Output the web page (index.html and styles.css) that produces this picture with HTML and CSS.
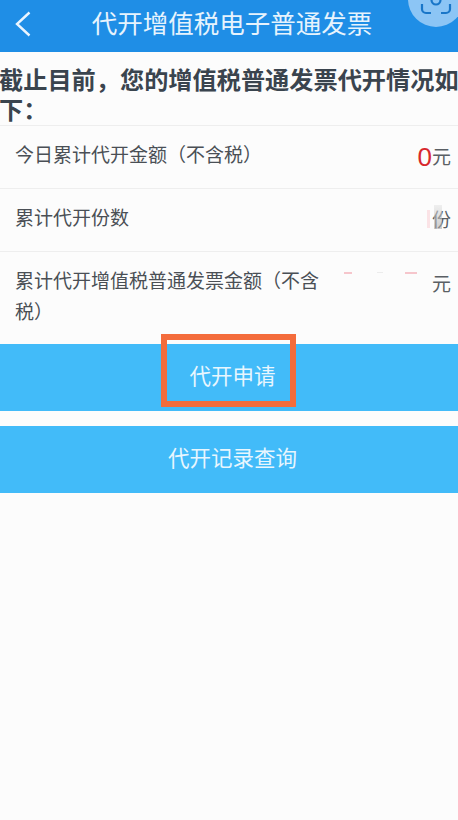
FILE: index.html
```html
<!DOCTYPE html>
<html lang="zh">
<head>
<meta charset="utf-8">
<title>代开增值税电子普通发票</title>
<link rel="stylesheet" href="styles.css">
</head>
<body>
<header class="bar">
  <svg class="back" viewBox="0 0 16 26" width="16" height="26"><path d="M14.5 1.5 2 13l12.5 11.5" fill="none" stroke="#eaf5ff" stroke-width="2.4"/></svg>
  <h1 class="title">代开增值税电子普通发票</h1>
  <div class="scan">
    <svg viewBox="0 0 32 32" width="32" height="32" class="scan-icon"><path d="M2 18v5a4 4 0 0 0 4 4h5M21 27h5a4 4 0 0 0 4-4v-5" fill="none" stroke="#1976c8" stroke-width="2.2"/><circle cx="16" cy="14" r="4.5" fill="none" stroke="#1976c8" stroke-width="2.2"/></svg>
  </div>
</header>
<main>
  <p class="intro">截止目前，您的增值税普通发票代开情况如下：</p>
  <div class="row">
    <span class="label">今日累计代开金额（不含税）</span>
    <span class="value"><b class="num">0</b>元</span>
  </div>
  <div class="row">
    <span class="label">累计代开份数</span>
    <span class="value">份<i class="smudge smudge-a"></i><i class="smudge smudge-b"></i></span>
  </div>
  <div class="row row-tall">
    <span class="label">累计代开增值税普通发票金额（不含税）</span>
    <span class="value"><i class="smudge smudge-c"></i><i class="smudge smudge-d"></i><i class="smudge smudge-e"></i>元</span>
  </div>
  <div class="actions">
    <button class="btn">代开申请</button>
    <button class="btn">代开记录查询</button>
    <div class="mark"></div>
  </div>
</main>
</body>
</html>
```
FILE: styles.css
```css
* { box-sizing: border-box; }
html, body { margin: 0; height: 100%; }
body {
  width: 458px;
  height: 820px;
  overflow: hidden;
  background: #fcfcfc;
  font-family: "Liberation Sans", "Noto Sans CJK SC", sans-serif;
  color: #444a50;
}
.bar {
  position: relative;
  height: 52px;
  background: #1f8ee6;
  display: flex;
  align-items: center;
  justify-content: center;
}
.back { position: absolute; left: 15px; top: 11px; }
.title {
  margin: 0 0 3px 6px;
  font-size: 25.5px;
  font-weight: 400;
  line-height: 49px;
  color: #e6f3fd;
}
.scan {
  position: absolute;
  left: 408px;
  top: -29px;
  width: 56px;
  height: 56px;
  border-radius: 50%;
  background: #8cc5f5;
}
.scan-icon { position: absolute; left: 12px; top: 15px; }
.intro {
  margin: 0 0 0 -1px;
  width: 460px;
  height: 73px;
  padding-top: 14px;
  font-size: 24.2px;
  line-height: 30px;
  font-weight: 700;
  color: #3a444e;
}
.row {
  height: 63px;
  padding: 0 7px 4px 15px;
  border-top: 1px solid #eeeeee;
  display: flex;
  justify-content: space-between;
  align-items: center;
  font-size: 19px;
  line-height: 31px;
}
.row-tall {
  height: 93px;
  align-items: flex-start;
  padding-top: 14px;
}
.row-tall .label { width: 308px; }
.label { color: #4a4f55; }
.value {
  position: relative;
  display: flex;
  align-items: center;
  margin-top: 4px;
  color: #5a5f64;
}
.row-tall .value { margin-top: 3px; }
.num {
  font-size: 26px;
  font-weight: 400;
  color: #d8282c;
}
.smudge { position: absolute; display: block; }
.smudge-a { left: -5px; top: 5px; width: 3px; height: 18px; background: #fbe3e6; }
.smudge-b { left: 2px; top: 0; width: 8px; height: 24px; background: linear-gradient(#e4e4e4, #a8a8a8); opacity: .55; }
.smudge-c { left: -88px; top: 3px; width: 8px; height: 2px; background: #f6c6cc; }
.smudge-d { left: -55px; top: 3px; width: 6px; height: 1px; background: #ececec; }
.smudge-e { left: -27px; top: 3px; width: 12px; height: 2px; background: #f6c6cc; }
.actions {
  position: relative;
  display: flex;
  flex-direction: column;
  gap: 15px;
}
.btn {
  height: 67px;
  padding: 0 0 6px 7px;
  border: 0;
  background: #42bbf9;
  color: #e8f6fe;
  font: inherit;
  font-size: 21.5px;
  text-align: center;
}
.mark {
  position: absolute;
  left: 161px;
  top: -10px;
  width: 135px;
  height: 73px;
  border: 6px solid #f46c3c;
}
```
